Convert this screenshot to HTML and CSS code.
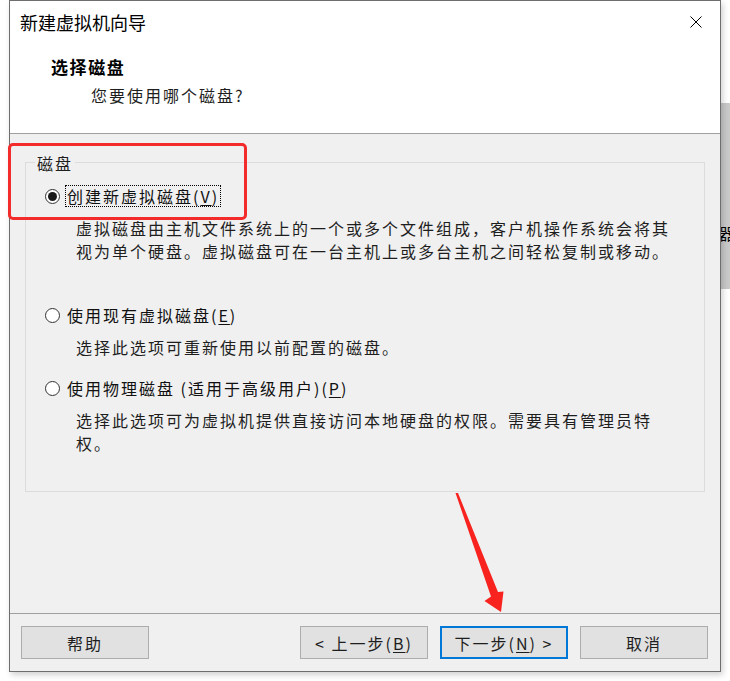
FILE: index.html
```html
<!DOCTYPE html>
<html lang="zh-CN">
<head>
<meta charset="utf-8">
<title>新建虚拟机向导</title>
<link rel="stylesheet" href="styles.css">
</head>
<body>
<div class="page">
  <div class="window">
    <div class="header">
      <div class="titlebar">
        <span class="title">新建虚拟机向导</span>
        <svg class="close" width="12" height="12" viewBox="0 0 12 12"><path d="M0.5 0.5 L11.5 11.5 M11.5 0.5 L0.5 11.5" stroke="#000" stroke-width="1" fill="none"/></svg>
      </div>
      <div class="heading">选择磁盘</div>
      <div class="subheading">您要使用哪个磁盘?</div>
    </div>
    <div class="content">
      <div class="group">
        <div class="group-label">磁盘</div>
        <div class="option">
          <span class="radio checked"></span>
          <span class="option-label focus">创建新虚拟磁盘(<u>V</u>)</span>
        </div>
        <div class="desc">虚拟磁盘由主机文件系统上的一个或多个文件组成，客户机操作系统会将其<br>视为单个硬盘。虚拟磁盘可在一台主机上或多台主机之间轻松复制或移动。</div>
        <div class="option opt2">
          <span class="radio"></span>
          <span class="option-label">使用现有虚拟磁盘(<u>E</u>)</span>
        </div>
        <div class="desc">选择此选项可重新使用以前配置的磁盘。</div>
        <div class="option opt3">
          <span class="radio"></span>
          <span class="option-label">使用物理磁盘 (适用于高级用户)(<u>P</u>)</span>
        </div>
        <div class="desc">选择此选项可为虚拟机提供直接访问本地硬盘的权限。需要具有管理员特<br>权。</div>
      </div>
    </div>
    <div class="footer">
      <button class="btn">帮助</button>
      <button class="btn back">&lt; 上一步(<u>B</u>)</button>
      <button class="btn default">下一步(<u>N</u>) &gt;</button>
      <button class="btn">取消</button>
    </div>
  </div>
  <div class="side">
    <div class="side-top"></div>
    <div class="side-band"><span class="side-char">器</span></div>
  </div>
  <div class="mark-box"></div>
  <svg class="mark-arrow" width="730" height="681" viewBox="0 0 730 681"><polygon points="455.5,493 458,493 498,592 503.5,591.5 501,612 484.5,601 491,596.5" fill="#f8231f"/></svg>
</div>
</body>
</html>
```
FILE: styles.css
```css
html, body {
  margin: 0;
  padding: 0;
  background: #ffffff;
}
body {
  font-family: "Noto Sans CJK SC", "Noto Sans", sans-serif;
  color: #1e1e1e;
}
.page {
  position: relative;
  display: flex;
  width: 730px;
  height: 681px;
  overflow: hidden;
}
.window {
  margin-left: 9px;
  width: 710px;
  height: 670px;
  border: 1px solid #6e6e6e;
  display: flex;
  flex-direction: column;
  background: #f0f0f0;
  box-shadow: 2px 3px 6px rgba(0,0,0,0.18);
  position: relative;
  z-index: 1;
}
.header {
  background: #ffffff;
  height: 132px;
  border-bottom: 1px solid #a0a0a0;
  box-sizing: content-box;
}
.titlebar {
  display: flex;
  justify-content: space-between;
  align-items: center;
  padding: 9px 18px 0 10px;
  height: 24px;
}
.title {
  font-size: 18px;
  line-height: 24px;
  color: #000;
}
.close {
  display: block;
}
.heading {
  margin-top: 21px;
  padding-left: 41px;
  font-size: 17px;
  font-weight: 700;
  letter-spacing: 1.6px;
  line-height: 24px;
  color: #000;
}
.subheading {
  margin-top: 5px;
  padding-left: 81px;
  font-size: 16px;
  letter-spacing: 2px;
  line-height: 22px;
  color: #1e1e1e;
}
.content {
  flex: 1;
  background: #f0f0f0;
}
.group {
  margin: 28px 15px 0;
  border: 1px solid #dcdcdc;
  padding: 0 0 36px 19px;
}
.group-label {
  display: block;
  width: fit-content;
  margin: -10px 0 0 -10px;
  padding: 0 2px;
  background: #f0f0f0;
  font-size: 16px;
  letter-spacing: 2px;
  line-height: 20px;
  height: 20px;
}
.option {
  display: flex;
  align-items: center;
  height: 22px;
  margin-top: 12px;
}
.opt2 {
  margin-top: 41px;
}
.opt3 {
  margin-top: 18px;
}
.radio {
  width: 13px;
  height: 13px;
  border: 1px solid #333;
  border-radius: 50%;
  background: #fff;
  display: flex;
  align-items: center;
  justify-content: center;
  flex: none;
}
.radio.checked::after {
  content: "";
  width: 9px;
  height: 9px;
  border-radius: 50%;
  background: #1a1a1a;
}
.option-label {
  margin-left: 5px;
  padding: 0 1px;
  border: 1px dotted transparent;
  font-size: 16px;
  letter-spacing: 2px;
  line-height: 20px;
  white-space: nowrap;
  color: #111;
}
.option-label.focus {
  border-color: #000;
}
.desc {
  margin: 10px 0 0 31px;
  font-size: 16px;
  letter-spacing: 2px;
  line-height: 23px;
  white-space: nowrap;
}
u {
  text-decoration: underline;
  text-underline-offset: 2px;
}
.footer {
  height: 45px;
  border-top: 1px solid #a0a0a0;
  box-sizing: content-box;
  padding: 12px 12px 0 11px;
  display: flex;
  gap: 12px;
  align-items: flex-start;
  background: #f0f0f0;
}
.btn {
  width: 128px;
  height: 33px;
  box-sizing: border-box;
  border: 1px solid #adadad;
  background: #e1e1e1;
  font-family: "Noto Sans CJK SC", "Noto Sans", sans-serif;
  font-size: 16px;
  letter-spacing: 2px;
  color: #1e1e1e;
  padding: 0;
  line-height: 20px;
}
.btn.back {
  margin-left: auto;
}
.btn.default {
  border: 2px solid #0078d7;
}
.side {
  width: 9px;
  display: flex;
  flex-direction: column;
}
.side-top {
  height: 103px;
}
.side-band {
  height: 186px;
  background: #c9c9c9;
  overflow: hidden;
  position: relative;
  padding-top: 120px;
  box-sizing: border-box;
}
.side-char {
  display: block;
  margin-left: -2px;
  font-size: 16px;
  line-height: 20px;
  color: #000;
  white-space: nowrap;
}
.mark-box {
  position: absolute;
  left: 8px;
  top: 143px;
  width: 233px;
  height: 71px;
  border: 3px solid #f32b2b;
  border-radius: 5px;
  z-index: 2;
}
.mark-arrow {
  position: absolute;
  left: 0;
  top: 0;
  z-index: 2;
  pointer-events: none;
}
```
